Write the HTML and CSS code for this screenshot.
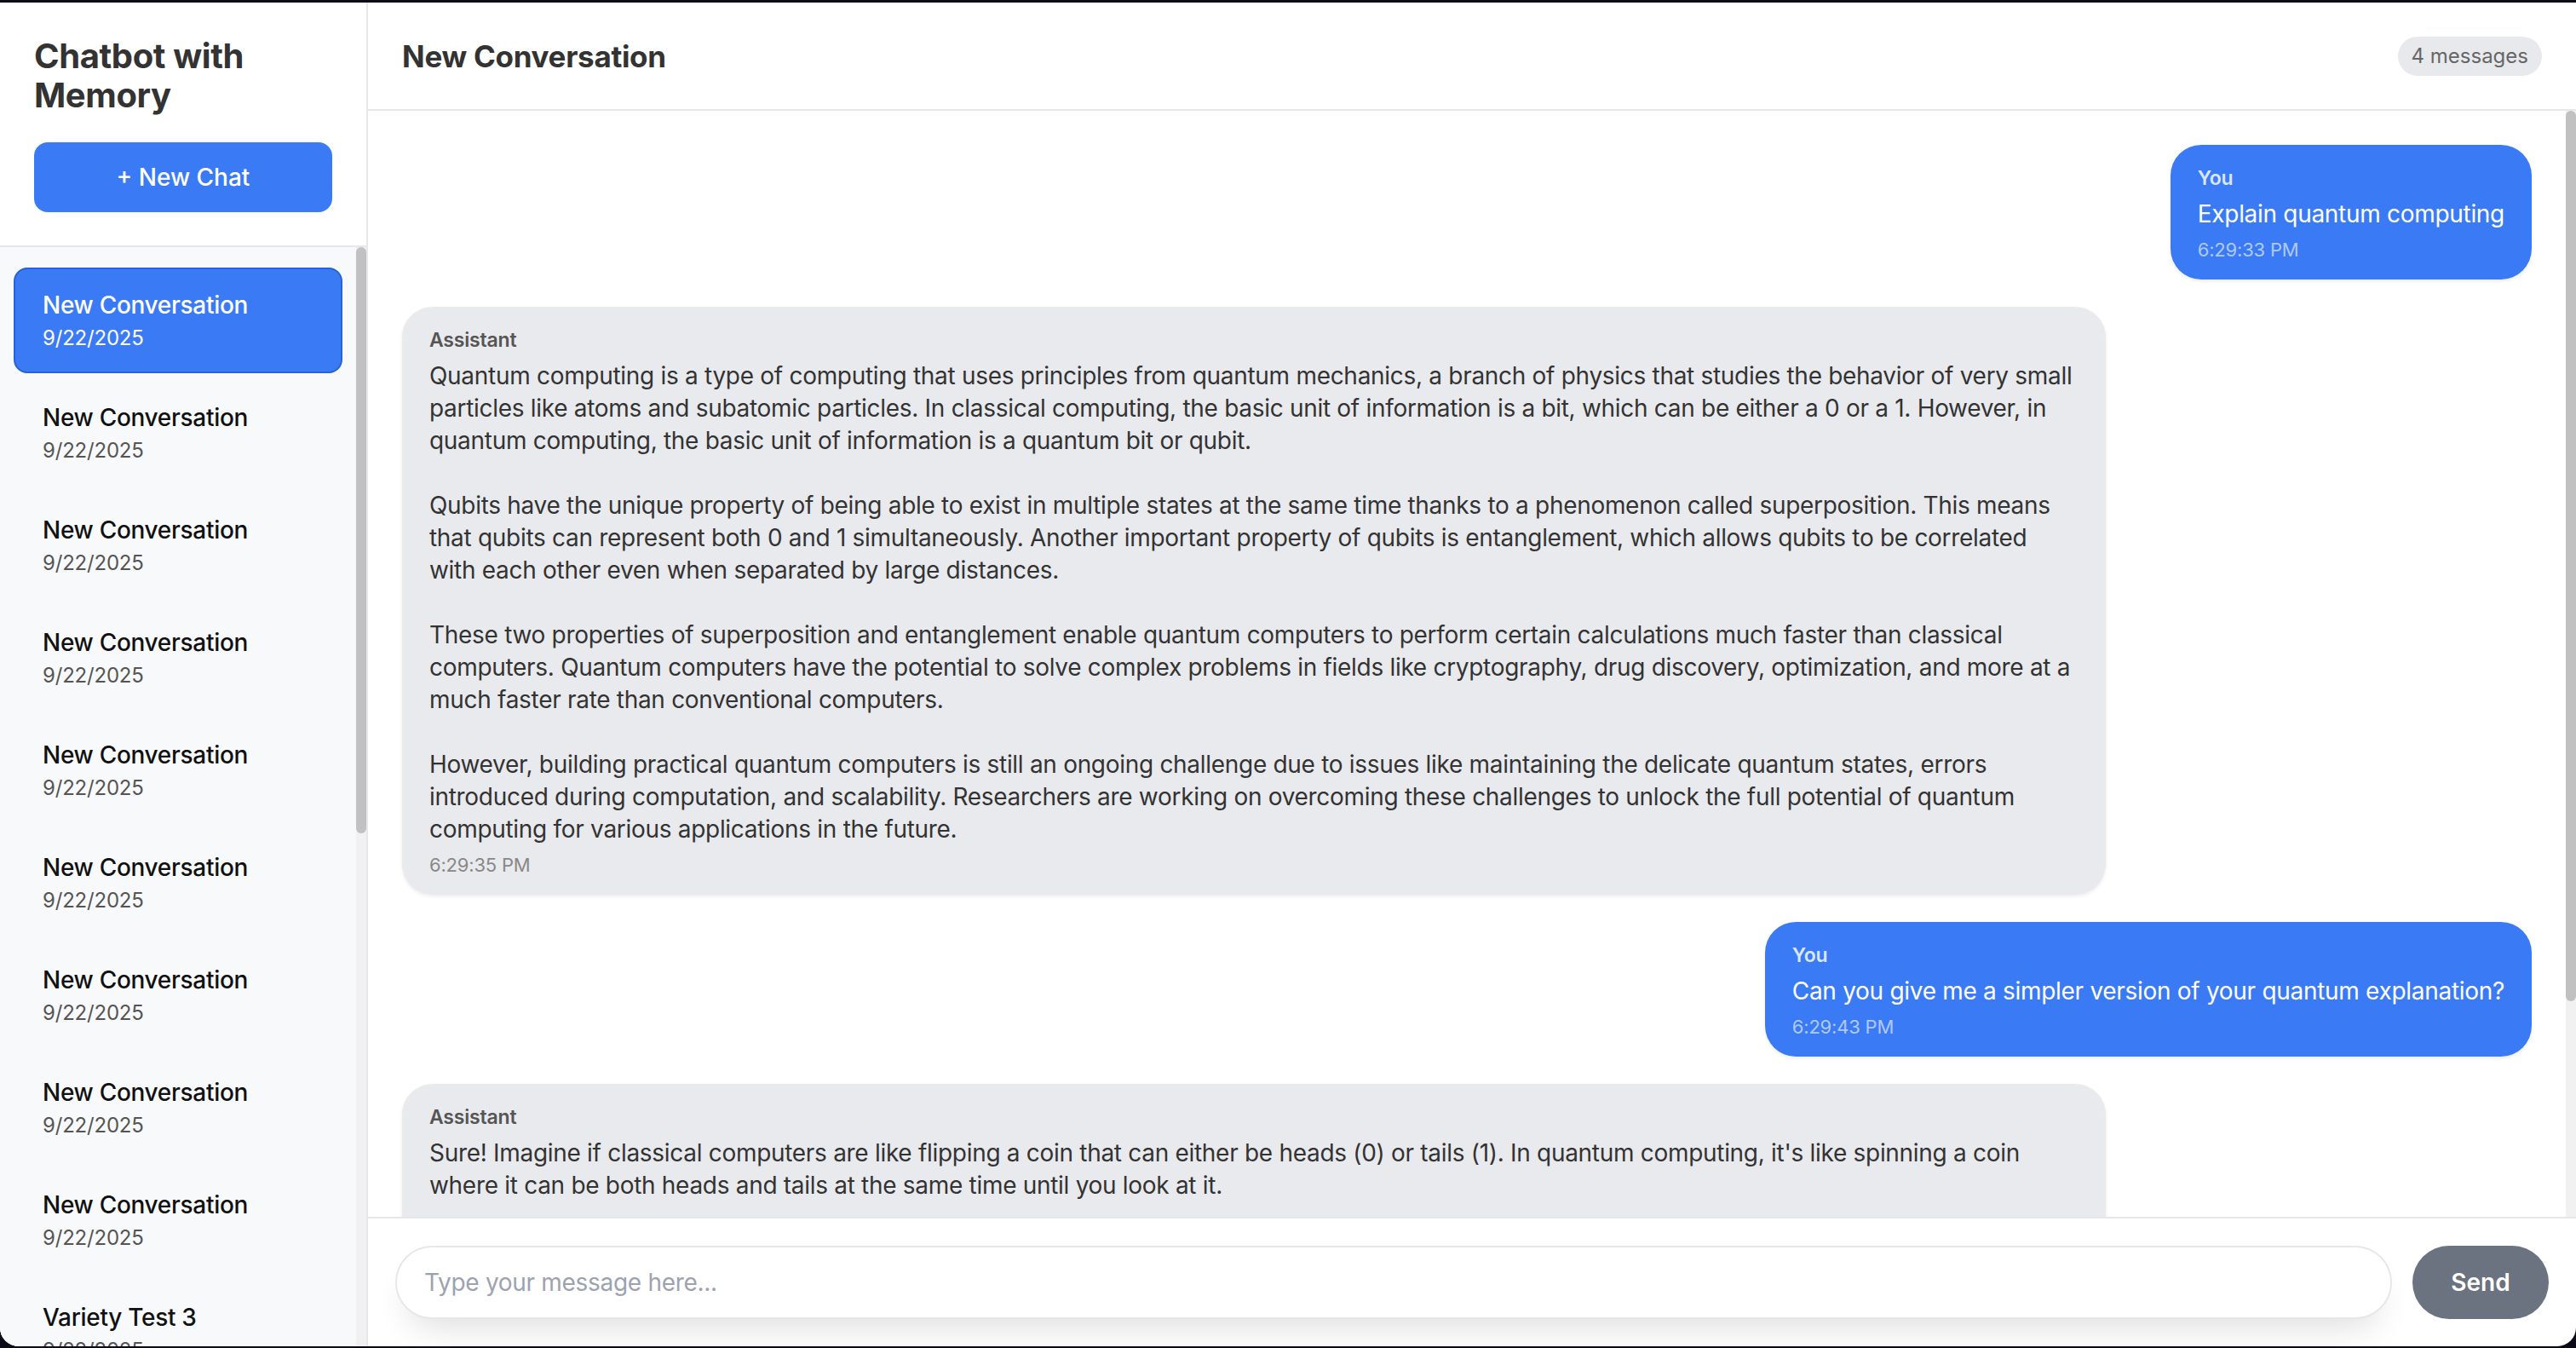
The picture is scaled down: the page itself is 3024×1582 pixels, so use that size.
FILE: index.html
```html
<!DOCTYPE html>
<html lang="en">
<head>
<meta charset="utf-8">
<title>Chatbot with Memory</title>
<link rel="stylesheet" href="styles.css">
</head>
<body>
<div class="app">
  <aside class="sidebar">
    <div class="sidebar-header">
      <h1 class="app-title">Chatbot with Memory</h1>
      <button class="new-chat">+ New Chat</button>
    </div>
    <div class="conv-panel">
      <div class="conv-list">
        <div class="conv active"><div class="conv-title">New Conversation</div><div class="conv-date">9/22/2025</div></div>
        <div class="conv"><div class="conv-title">New Conversation</div><div class="conv-date">9/22/2025</div></div>
        <div class="conv"><div class="conv-title">New Conversation</div><div class="conv-date">9/22/2025</div></div>
        <div class="conv"><div class="conv-title">New Conversation</div><div class="conv-date">9/22/2025</div></div>
        <div class="conv"><div class="conv-title">New Conversation</div><div class="conv-date">9/22/2025</div></div>
        <div class="conv"><div class="conv-title">New Conversation</div><div class="conv-date">9/22/2025</div></div>
        <div class="conv"><div class="conv-title">New Conversation</div><div class="conv-date">9/22/2025</div></div>
        <div class="conv"><div class="conv-title">New Conversation</div><div class="conv-date">9/22/2025</div></div>
        <div class="conv"><div class="conv-title">New Conversation</div><div class="conv-date">9/22/2025</div></div>
        <div class="conv"><div class="conv-title">Variety Test 3</div><div class="conv-date">9/22/2025</div></div>
      </div>
      <div class="scroll-track"><div class="scroll-thumb side-thumb"></div></div>
    </div>
  </aside>
  <main class="chat">
    <header class="chat-header">
      <h2 class="chat-title">New Conversation</h2>
      <span class="count">4 messages</span>
    </header>
    <div class="chat-body">
      <div class="messages">
        <div class="msg user">
          <div class="msg-role">You</div>
          <div class="msg-text">Explain quantum computing</div>
          <div class="msg-time">6:29:33 PM</div>
        </div>
        <div class="msg bot">
          <div class="msg-role">Assistant</div>
          <div class="msg-text">Quantum computing is a type of computing that uses principles from quantum mechanics, a branch of physics that studies the behavior of very small particles like atoms and subatomic particles. In classical computing, the basic unit of information is a bit, which can be either a 0 or a 1. However, in quantum computing, the basic unit of information is a quantum bit or qubit.

Qubits have the unique property of being able to exist in multiple states at the same time thanks to a phenomenon called superposition. This means that qubits can represent both 0 and 1 simultaneously. Another important property of qubits is entanglement, which allows qubits to be correlated with each other even when separated by large distances.

These two properties of superposition and entanglement enable quantum computers to perform certain calculations much faster than classical computers. Quantum computers have the potential to solve complex problems in fields like cryptography, drug discovery, optimization, and more at a much faster rate than conventional computers.

However, building practical quantum computers is still an ongoing challenge due to issues like maintaining the delicate quantum states, errors introduced during computation, and scalability. Researchers are working on overcoming these challenges to unlock the full potential of quantum computing for various applications in the future.</div>
          <div class="msg-time">6:29:35 PM</div>
        </div>
        <div class="msg user">
          <div class="msg-role">You</div>
          <div class="msg-text">Can you give me a simpler version of your quantum explanation?</div>
          <div class="msg-time">6:29:43 PM</div>
        </div>
        <div class="msg bot">
          <div class="msg-role">Assistant</div>
          <div class="msg-text">Sure! Imagine if classical computers are like flipping a coin that can either be heads (0) or tails (1). In quantum computing, it's like spinning a coin where it can be both heads and tails at the same time until you look at it.

</div>
        </div>
      </div>
      <div class="scroll-track"><div class="scroll-thumb chat-thumb"></div></div>
    </div>
    <div class="input-area">
      <input class="msg-input" type="text" placeholder="Type your message here...">
      <button class="send">Send</button>
    </div>
  </main>
</div>
</body>
</html>
```
FILE: styles.css
```css
* { box-sizing: border-box; }

html, body {
  margin: 0;
  height: 100%;
}

body {
  background: #0c0a16;
  font-family: Inter, "Noto Sans", "Liberation Sans", sans-serif;
  color: #333;
  overflow: hidden;
}

.app {
  display: flex;
  height: 1577px;
  margin-top: 3px;
  background: #fff;
  border-radius: 0 0 22px 22px;
  overflow: hidden;
}

/* Sidebar */
.sidebar {
  width: 432px;
  flex: none;
  display: flex;
  flex-direction: column;
  border-right: 2px solid #e5e7eb;
  background: #fff;
}

.sidebar-header {
  padding: 40px 40px 39px;
  border-bottom: 2px solid #e5e7eb;
}

.app-title {
  margin: 0 0 32px;
  font-size: 40px;
  line-height: 46px;
  font-weight: 700;
  color: #333;
  letter-spacing: -0.4px;
}

.new-chat {
  display: block;
  width: 100%;
  height: 82px;
  border: none;
  border-radius: 16px;
  background: #3a7bf5;
  color: #fff;
  font-family: inherit;
  font-size: 28px;
  font-weight: 500;
}

.conv-panel {
  flex: 1;
  min-height: 0;
  display: flex;
  background: #f8f9fb;
}

.conv-list {
  flex: 1;
  overflow: hidden;
  padding: 24px 16px;
}

.scroll-track {
  flex: none;
  width: 12px;
  background: #f1f1f1;
}

.scroll-thumb {
  background: #c1c1c1;
  border-radius: 6px;
}

.side-thumb { height: 688px; }
.chat-thumb { height: 1045px; }

.conv {
  border: 2px solid transparent;
  border-radius: 16px;
  padding: 24px 32px;
  margin-bottom: 8px;
}

.conv.active {
  background: #3a7bf5;
  border-color: #2563d9;
}

.conv-title {
  font-size: 28px;
  line-height: 36px;
  font-weight: 500;
  color: #111;
  letter-spacing: -0.3px;
}

.conv-date {
  margin-top: 5px;
  font-size: 24px;
  line-height: 31px;
  color: #555;
  letter-spacing: -0.2px;
}

.conv.active .conv-title,
.conv.active .conv-date {
  color: #fff;
}

/* Main chat */
.chat {
  flex: 1;
  min-width: 0;
  display: flex;
  flex-direction: column;
}

.chat-header {
  height: 127px;
  flex: none;
  display: flex;
  align-items: center;
  justify-content: space-between;
  padding: 0 40px;
  border-bottom: 2px solid #e5e7eb;
}

.chat-title {
  margin: 0;
  font-size: 35px;
  font-weight: 700;
  color: #333;
  letter-spacing: -0.3px;
}

.count {
  background: #e8e9ed;
  color: #666;
  font-size: 24px;
  line-height: 30px;
  padding: 8px 16px;
  border-radius: 23px;
}

.chat-body {
  flex: 1;
  min-height: 0;
  display: flex;
}

.messages {
  flex: 1;
  min-width: 0;
  overflow: hidden;
  padding: 40px;
  display: flex;
  flex-direction: column;
  gap: 32px;
}

.msg {
  flex: none;
  max-width: 80%;
  padding: 24px 32px 20px;
  border-radius: 36px;
  box-shadow: 0 2px 4px rgba(0, 0, 0, 0.08);
}

.msg.user {
  align-self: flex-end;
  background: #3a7bf5;
  color: #fff;
}

.msg.bot {
  align-self: flex-start;
  background: #e9eaee;
  color: #333;
}

.msg-role {
  font-size: 23px;
  line-height: 30px;
  font-weight: 600;
  margin-bottom: 8px;
  letter-spacing: -0.2px;
}

.msg.user .msg-role { color: rgba(255, 255, 255, 0.82); }
.msg.bot .msg-role { color: #555; }

.msg-text {
  font-size: 28px;
  line-height: 38px;
  white-space: pre-wrap;
  letter-spacing: -0.3px;
}

.msg-time {
  margin-top: 8px;
  font-size: 22px;
  line-height: 30px;
  letter-spacing: -0.2px;
}

.msg.user .msg-time { color: rgba(255, 255, 255, 0.6); }
.msg.bot .msg-time { color: #888; }

.input-area {
  flex: none;
  display: flex;
  gap: 24px;
  padding: 32px;
  border-top: 2px solid #e5e7eb;
}

.msg-input {
  flex: 1;
  height: 86px;
  border: 2px solid #e5e7eb;
  border-radius: 43px;
  padding: 0 32px;
  font-family: inherit;
  font-size: 28px;
  letter-spacing: -0.3px;
  color: #333;
  outline: none;
  box-shadow: 0 24px 40px -16px rgba(0, 0, 0, 0.14);
}

.msg-input::placeholder { color: #9ca3af; }

.send {
  flex: none;
  width: 160px;
  height: 86px;
  border: none;
  border-radius: 43px;
  background: #6b7280;
  color: #fff;
  font-family: inherit;
  font-size: 28px;
  font-weight: 600;
}
```
